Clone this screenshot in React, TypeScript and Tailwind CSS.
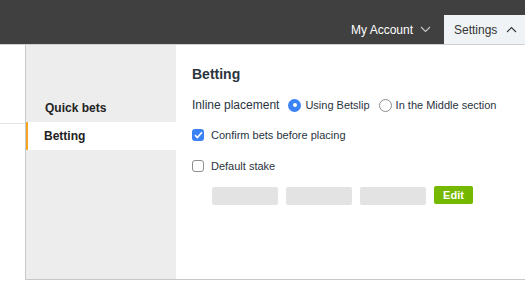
import { useState } from "react";

const font = { fontFamily: '"Liberation Sans", Arial, sans-serif' };

const Chevron = ({ up }: { up?: boolean }) => (
  <svg width="11" height="7" viewBox="0 0 11 7" fill="none" aria-hidden="true">
    <path
      d={up ? "M1 6L5.5 1.5L10 6" : "M1 1L5.5 5.5L10 1"}
      stroke="currentColor"
      strokeWidth={1.1}
    />
  </svg>
);

const Radio = ({ checked }: { checked: boolean }) =>
  checked ? (
    <span className="w-[13px] h-[13px] rounded-full bg-[#3b82f6] flex items-center justify-center">
      <span className="w-[4px] h-[4px] rounded-full bg-white" />
    </span>
  ) : (
    <span className="w-[13px] h-[13px] rounded-full border border-[#8d8d8d] bg-white" />
  );

const Checkbox = ({ checked }: { checked: boolean }) =>
  checked ? (
    <span className="w-[12px] h-[12px] rounded-[3px] bg-[#3b82f6] flex items-center justify-center">
      <svg width="9" height="8" viewBox="0 0 9 8" fill="none" aria-hidden="true">
        <path d="M1 4.2L3.4 6.5L8 1.2" stroke="white" strokeWidth={1.6} />
      </svg>
    </span>
  ) : (
    <span className="w-[12px] h-[12px] rounded-[3px] border border-[#8d8d8d] bg-white" />
  );

export default function App() {
  const [active] = useState("Betting");

  return (
    <div className="w-[525px] h-[295px] bg-white overflow-hidden" style={font}>
      <div className="h-[45px] bg-[#404040] border-b border-[#d0d0d0] flex items-end justify-end">
        <div className="flex items-center gap-[8px] h-[29px] pr-[13px] text-white text-[12px]">
          My Account
          <span className="text-[#c8c8c8] -ml-px">
            <Chevron />
          </span>
        </div>
        <div className="flex items-center gap-[9px] h-[29px] w-[81px] pl-[10px] bg-[#f0f3f5] text-[#333] text-[12px]">
          Settings
          <Chevron up />
        </div>
      </div>

      <div className="flex">
        <div className="w-[25px] pt-[78px]">
          <div className="border-t border-[#e4e4e4]" />
        </div>
        <div className="flex-1 flex h-[235px] border-l border-b border-[#c8c8c8]">
          <div className="w-[150px] bg-[#ededed] pt-[49px] text-[12px] font-bold text-[#222]">
            {["Quick bets", "Betting"].map((item) =>
              item === active ? (
                <div
                  key={item}
                  className="h-[28px] flex items-center pl-[16px] bg-white border-l-2 border-[#f5a623]"
                >
                  {item}
                </div>
              ) : (
                <div key={item} className="h-[28px] flex items-center pl-[19px]">
                  {item}
                </div>
              )
            )}
          </div>

          <div className="flex-1 pl-[16px] pt-[21px] text-[#2a3440]">
            <h2 className="text-[14px] font-bold leading-[17px]">Betting</h2>
            <div className="flex items-center mt-[14px] h-[16px] text-[12px]">
              <span className="mr-[9px]">Inline placement</span>
              <Radio checked />
              <span className="ml-[4px] mr-[9px] text-[11px]">Using Betslip</span>
              <Radio checked={false} />
              <span className="ml-[4px] text-[11px]">In the Middle section</span>
            </div>
            <div className="flex items-center gap-[7px] mt-[14px] h-[16px] text-[11px]">
              <Checkbox checked />
              Confirm bets before placing
            </div>
            <div className="flex items-center gap-[7px] mt-[15px] h-[16px] text-[11px]">
              <Checkbox checked={false} />
              Default stake
            </div>
            <div className="flex items-start gap-[8px] mt-[12px] ml-[20px]">
              <div className="w-[66px] h-[18px] rounded-[2px] bg-[#e3e3e3] mt-[1px]" />
              <div className="w-[66px] h-[18px] rounded-[2px] bg-[#e3e3e3] mt-[1px]" />
              <div className="w-[66px] h-[18px] rounded-[2px] bg-[#e3e3e3] mt-[1px]" />
              <button className="w-[39px] h-[18px] rounded-[2px] bg-[#74b800] text-white text-[11px] font-bold">
                Edit
              </button>
            </div>
          </div>
        </div>
      </div>
    </div>
  );
}
